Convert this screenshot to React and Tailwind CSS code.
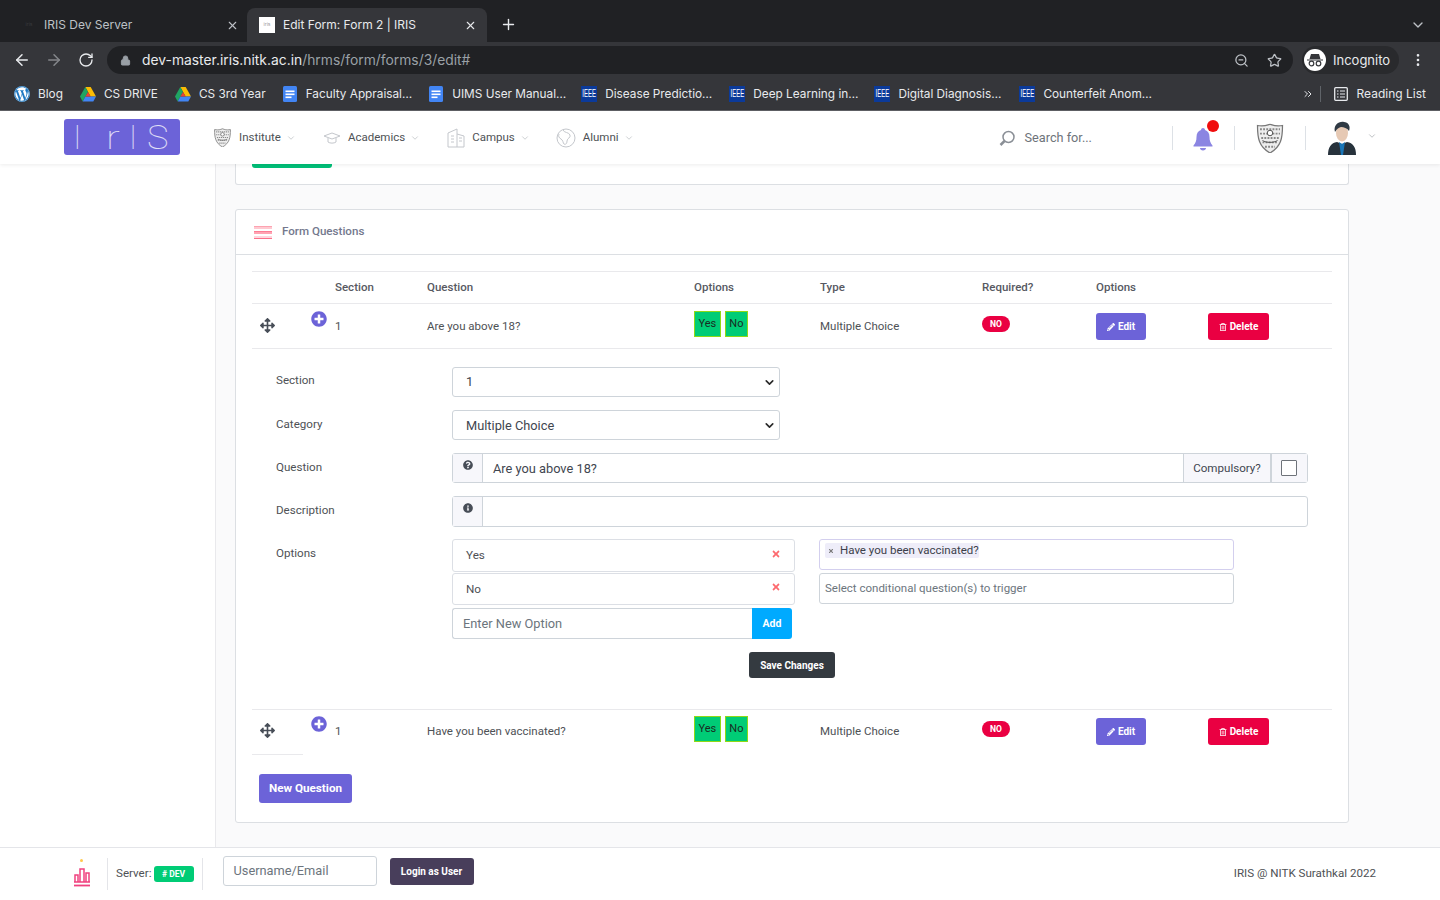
import React from "react";
import { ArrowLeft, ArrowRight, RotateCw, Lock, ZoomOut, Star, ChevronDown, X, Plus, ChevronsRight, MoreVertical } from "lucide-react";
import { FaArrowsAlt, FaPlusCircle, FaQuestionCircle, FaInfoCircle, FaPencilAlt, FaRegTrashAlt, FaTimes, FaWordpress } from "react-icons/fa";

const chromeFont = "font-['Inter','Liberation_Sans',sans-serif]";

function Drive() {
  return (
    <svg width="16" height="15" viewBox="0 0 16 15" className="shrink-0">
      <path d="M5.3 0h5.4l5.3 9.5h-5.4z" fill="#fbbc04" />
      <path d="M5.3 0L0 9.5 2.7 14.5 8 5z" fill="#1fa463" />
      <path d="M5.4 9.5H16l-2.7 5H2.7z" fill="#4285f4" />
      <path d="M5.4 9.5L8 5l2.6 4.5z" fill="#ea4335" />
    </svg>
  );
}
function Docs() {
  return (
    <svg width="16" height="16" viewBox="0 0 16 16" className="shrink-0">
      <rect x="1" width="14" height="16" rx="1.5" fill="#4285f4" />
      <rect x="3.5" y="4.5" width="9" height="1.6" fill="#fff" />
      <rect x="3.5" y="7.5" width="9" height="1.6" fill="#fff" />
      <rect x="3.5" y="10.5" width="6" height="1.6" fill="#fff" />
    </svg>
  );
}
function Ieee() {
  return (
    <div className="w-[16px] h-[16px] shrink-0 bg-[#0b3a9a] flex items-center justify-center overflow-hidden">
      <span className="text-white text-[6px] leading-none scale-y-[1.7] font-['Liberation_Sans',sans-serif]">IEEE</span>
    </div>
  );
}
function Bookmark({ icon, label, className = "" }) {
  return (
    <div className={`flex items-center gap-[8px] ${className}`}>
      {icon}
      <span className="text-[11.8px] mt-[1px] text-[#e8eaed] whitespace-nowrap">{label}</span>
    </div>
  );
}
function Crest({ size = 20, className = "" }) {
  return (
    <svg width={size} height={size} viewBox="0 0 24 24" className={`shrink-0 ${className}`}>
      <path d="M2 2c5 1 7 0 10-1 3 1 5 2 10 1 0 10-1 17-10 22C3 19 2 12 2 2z" fill="#eee" stroke="#777" strokeWidth="1" />
      <path d="M4 5h16M4 8.500h16M5 12h14M6 15.500h12M8 19h8" stroke="#888" strokeWidth="1.500" strokeDasharray="1.500 1" />
      <circle cx="12" cy="8" r="2.2" fill="#fff" stroke="#555" strokeWidth=".8" />
      <path d="M6 14c3 2 9 2 12 0" fill="none" stroke="#555" strokeWidth=".8" />
    </svg>
  );
}
function NavItem({ icon, label, className = "" }) {
  return (
    <div className={`flex items-center ${className}`}>
      {icon}
      <span className="text-[11.5px] text-[#4e5155] ml-[7px]">{label}</span>
      <ChevronDown size={10} strokeWidth={1.2} className="text-[#9aa0a6] ml-[5px]" />
    </div>
  );
}
function Opt({ children }) {
  return <span className="h-[26px] px-[3.5px] flex items-center bg-[#00cc76] border border-[#8fd916] text-[11px] text-[#1a2a22]">{children}</span>;
}
function Row({ q, border, className = "" }) {
  return (
    <div className={`flex h-[45px] ${border ? "border-b border-[#e9e9ec]" : ""} ${className}`}>
      <div className="w-[59px] pl-[8px] pt-[14px]">
        <FaArrowsAlt size={15} className="text-[#474d57]" />
      </div>
      <div className="w-[24px] pt-[7px]">
        <FaPlusCircle size={16} className="text-[#6c63d8]" />
      </div>
      <div className="w-[92px] pt-[14px] text-[11.5px] text-[#4e5155]">1</div>
      <div className="w-[267px] pt-[14px] text-[11.5px] text-[#4e5155]">{q}</div>
      <div className="w-[126px] pt-[7px] flex gap-[4px] items-start"><Opt>Yes</Opt><Opt>No</Opt></div>
      <div className="w-[162px] pt-[14px] text-[11.5px] text-[#4e5155]">Multiple Choice</div>
      <div className="w-[114px] pt-[12px] flex items-start">
        <span className="flex items-center justify-center w-[28px] h-[16px] rounded-full bg-[#ea0042] text-white text-[8.5px] font-bold">NO</span>
      </div>
      <div className="w-[112px] pt-[9px] flex items-start">
        <span className="flex items-center justify-center gap-[3px] w-[50px] h-[27px] rounded-[3px] bg-[#6c63d8] text-white text-[10px] font-bold"><FaPencilAlt size={8} />Edit</span>
      </div>
      <div className="pt-[9px] flex items-start">
        <span className="flex items-center justify-center gap-[3px] w-[61px] h-[27px] rounded-[3px] bg-[#ea0042] text-white text-[10px] font-bold"><FaRegTrashAlt size={8} />Delete</span>
      </div>
    </div>
  );
}
function FormRow({ label, children, className = "", labelPad = "pt-[6px]" }) {
  return (
    <div className={`flex ${className}`}>
      <div className={`w-[200px] pl-[24px] text-[11.6px] text-[#4e5155] ${labelPad}`}>{label}</div>
      {children}
    </div>
  );
}
function Select({ value, textClass = "" }) {
  return (
    <div className="w-[328px] h-[30px] border border-[#ced4da] rounded-[3px] flex items-center justify-between pl-[13px] pr-[3px] text-[12.8px] text-[#3f4650]">
      <span className={textClass}>{value}</span>
      <ChevronDown size={13} strokeWidth={3} className="text-[#2a2a2a]" />
    </div>
  );
}
function OptionBox({ label, h, textClass = "" }) {
  return (
    <div className={`w-[343px] border border-[#dcdfe5] rounded-[3px] flex items-center justify-between pl-[13px] pr-[13px] text-[11.7px] text-[#4e5155] ${h}`}>
      <span className={textClass}>{label}</span>
      <FaTimes size={10} className="text-[#fd6a6f] -mt-[4px]" />
    </div>
  );
}

export default function App() {
  return (
    <div className="w-[1440px] h-[900px] overflow-hidden flex flex-col bg-white font-['Roboto',sans-serif]">
      <div className={chromeFont}>
        <div className="h-[42px] bg-[#202124] flex items-end pl-[8px] relative">
          <div className="w-[239px] h-[34px] flex items-center pl-[13px] pr-[8px]">
            <span className="w-[16px] text-[5px] text-[#3a3b3f] text-center">iris</span>
            <span className="text-xs text-[#bdc1c6] ml-[7px] flex-1">IRIS Dev Server</span>
            <X size={13} className="text-[#bdc1c6]" />
          </div>
          <div className="w-[240px] h-[34px] bg-[#35363a] rounded-t-[8px] flex items-center pl-[12px] pr-[10px]">
            <div className="w-[16px] h-[16px] bg-white text-[5px] text-[#999] flex items-center justify-center">iris</div>
            <span className="text-xs text-[#e8eaed] ml-[8px] flex-1">Edit Form: Form 2 | IRIS</span>
            <X size={13} className="text-[#e8eaed]" />
          </div>
          <Plus size={17} className="text-[#e8eaed] ml-[13px] mb-[9px]" />
          <ChevronDown size={16} className="text-[#bdc1c6] ml-auto mr-[14px] mb-[9px]" />
        </div>
        <div className="h-[36px] bg-[#35363a] flex items-center pl-[13px] pr-[14px]">
          <ArrowLeft size={18} className="text-[#e8eaed]" />
          <ArrowRight size={18} className="text-[#85878b] ml-[14px]" />
          <RotateCw size={16} className="text-[#e8eaed] ml-[15px]" />
          <div className="w-[1186px] h-[28px] ml-[13px] rounded-full bg-[#202124] flex items-center pl-[13px] pr-[11px]">
            <Lock size={11} className="text-[#9aa0a6]" fill="#9aa0a6" />
            <span className="text-[13.85px] ml-[11px] text-[#e8eaed]">dev-master.iris.nitk.ac.in<span className="text-[#9aa0a6]">/hrms/form/forms/3/edit#</span></span>
            <ZoomOut size={15} className="text-[#bdc1c6] ml-auto" />
            <Star size={15} className="text-[#bdc1c6] ml-[18px]" />
          </div>
          <div className="w-[97px] h-[28px] ml-[9px] rounded-full bg-[#292a2d] flex items-center pl-[1px]">
            <div className="w-[22px] h-[22px] ml-[1px] rounded-full bg-white flex items-center justify-center">
              <svg width="16" height="14" viewBox="0 0 16 14">
                <path d="M4 1h8l1.5 5h-11zM0 6.500h16v1H0z" fill="#35363a" />
                <circle cx="4.500" cy="10.500" r="2.300" fill="none" stroke="#35363a" strokeWidth="1.200" />
                <circle cx="11.500" cy="10.500" r="2.300" fill="none" stroke="#35363a" strokeWidth="1.200" />
              </svg>
            </div>
            <span className="text-[13px] text-[#e8eaed] ml-[7px] mt-[2px]">Incognito</span>
          </div>
          <MoreVertical size={16} className="text-[#e8eaed] ml-[11px]" />
        </div>
        <div className="h-[33px] bg-[#35363a] border-b border-[#5f6065] flex items-center pl-[14px] pr-[14px]">
          <Bookmark icon={<FaWordpress size={16} className="text-white bg-[#1e78c2] rounded-full" />} label="Blog" />
          <Bookmark icon={<Drive />} label="CS DRIVE" className="ml-[17px]" />
          <Bookmark icon={<Drive />} label="CS 3rd Year" className="ml-[17px]" />
          <Bookmark icon={<Docs />} label="Faculty Appraisal…" className="ml-[16px]" />
          <Bookmark icon={<Docs />} label="UIMS User Manual…" className="ml-[16px]" />
          <Bookmark icon={<Ieee />} label="Disease Predictio…" className="ml-[15px]" />
          <Bookmark icon={<Ieee />} label="Deep Learning in…" className="ml-[17px]" />
          <Bookmark icon={<Ieee />} label="Digital Diagnosis…" className="ml-[16px]" />
          <Bookmark icon={<Ieee />} label="Counterfeit Anom…" className="ml-[18px]" />
          <ChevronsRight size={12} className="text-[#e8eaed] ml-auto" />
          <div className="w-px h-[16px] bg-[#5f6368] ml-[6px]" />
          <svg width="14" height="14" viewBox="0 0 14 14" className="ml-[13px]">
            <rect x=".7" y=".7" width="12.6" height="12.6" rx="1" fill="none" stroke="#e8eaed" strokeWidth="1.3" />
            <path d="M3 4h1.500M6 4h5M3 7h1.500M6 7h5M3 10h1.500M6 10h5" stroke="#e8eaed" strokeWidth="1.2" />
          </svg>
          <span className="text-[12px] text-[#e8eaed] ml-[9px]">Reading List</span>
        </div>
      </div>

      <div className="relative z-10 h-[53px] shrink-0 bg-white shadow-[0_1px_4px_rgba(0,0,0,0.08)] flex items-center pl-[64px]">
        <div className="w-[116px] h-[36px] -mt-[1px] rounded-[3px] bg-[#6c63d8] flex items-center pl-[9px] text-white/80 text-[33px] font-thin font-['Roboto',sans-serif] leading-none">
          <span>I</span>
          <span className="ml-[24px] scale-x-125 origin-left">r</span>
          <span className="ml-[12px]">I</span>
          <span className="ml-[10px] scale-x-110 origin-left">S</span>
        </div>
        <NavItem icon={<Crest size={19} />} label="Institute" className="ml-[33px]" />
        <NavItem
          icon={
            <svg width="18" height="16" viewBox="0 0 18 16" fill="none" stroke="#c4c7cc" strokeWidth="1">
              <path d="M1 6l8-3 8 3-8 3zM5 8v4c2 1.500 6 1.500 8 0V8" />
            </svg>
          }
          label="Academics"
          className="ml-[27px]"
        />
        <NavItem
          icon={
            <svg width="18" height="20" viewBox="0 0 18 20" fill="none" stroke="#c4c7cc" strokeWidth="1">
              <path d="M1 19V5l9-4v18M10 6l7 2v11M1 19h16M4 8h3M4 11h3M4 14h3M12 10h3M12 13h3" />
            </svg>
          }
          label="Campus"
          className="ml-[27px]"
        />
        <NavItem
          icon={
            <svg width="20" height="20" viewBox="0 0 20 20" fill="none" stroke="#c4c7cc" strokeWidth="1">
              <circle cx="10" cy="10" r="9" />
              <path d="M7 2c1 3 6 2 7 5s-3 3-3 6-2 4-3 3-1-4-3-5-3-3-2-5" />
            </svg>
          }
          label="Alumni"
          className="ml-[26px]"
        />
        <svg width="18" height="18" viewBox="0 0 18 18" fill="none" stroke="#8a8f96" strokeWidth="1.500" className="ml-[364px] mt-[2px]">
          <circle cx="10.500" cy="7" r="5.500" />
          <path d="M6.500 11l-4 4" strokeWidth="2.500" />
        </svg>
        <span className="text-[12.7px] text-[#6e737a] ml-[9px] w-[147px]">Search for...</span>
        <div className="w-px h-[24px] bg-[#dde1e6]" />
        <div className="relative w-[61px] h-[36px] flex items-center justify-center">
          <svg width="22" height="24" viewBox="0 0 22 24" className="mt-[2px]">
            <path d="M11 1c1 0 2 .8 2 2 3 1 4.500 3.500 4.500 7 0 4 1 6 3 8.500v1H1.500v-1c2-2.500 3-4.500 3-8.500 0-3.500 1.500-6 4.500-7 0-1.200 1-2 2-2zM8 21h6c0 1.500-1.300 2.500-3 2.500S8 22.500 8 21z" fill="#8b85e2" />
          </svg>
          <div className="absolute top-[0px] left-[34px] w-[12px] h-[12px] rounded-full bg-[#f00d0d]" />
        </div>
        <div className="w-px h-[24px] bg-[#dde1e6]" />
        <div className="w-[70px] flex justify-center"><Crest size={30} /></div>
        <div className="w-px h-[24px] bg-[#dde1e6]" />
        <svg width="28" height="34" viewBox="0 0 28 34" className="ml-[22px]">
          <path d="M0 34c0-8 3-12 9-13l5 2 5-2c6 1 9 5 9 13z" fill="#27323c" />
          <path d="M11 21l3 2 3-2-2 13h-2z" fill="#1976b8" />
          <ellipse cx="14" cy="12" rx="6" ry="8.500" fill="#e6c9b4" />
          <path d="M7 11C5 4 11 0 16 1c4 0 7 4 5 9-2-3-5-4-8-4-3 1-4 2-6 5z" fill="#2f3a44" />
        </svg>
        <ChevronDown size={10} strokeWidth={1.2} className="text-[#7d8288] ml-[11px] -mt-[3px]" />
      </div>

      <div className="flex-1 flex min-h-0 bg-[#fafafb]">
        <div className="w-[216px] shrink-0 bg-white border-r border-[#e9e9ec]" />
        <div className="flex-1 pl-[19px] pr-[91px]">
          <div className="h-[21px] bg-white border border-t-0 border-[#dcdfe3] rounded-b-[3px] pl-[16px]">
            <div className="w-[80px] h-[4px] bg-[#00bf78] rounded-b-[3px]" />
          </div>
          <div className="mt-[24px] h-[614px] bg-white border border-[#dcdfe3] rounded-[3px]">
            <div className="h-[45px] border-b border-[#dcdfe3] flex items-center pl-[18px]">
              <div className="w-[18px] h-[13px] flex flex-col justify-between">
                <div className="h-[3px] bg-[#ffc9d1] border-t border-[#fda3b1]" />
                <div className="h-[3px] bg-[#ffa3b2] border-t border-[#fd7c94]" />
                <div className="h-[3px] bg-[#ffd6dd] border-b border-[#fb6f8a]" />
              </div>
              <span className="text-[11.6px] text-[#74788d] ml-[10px] font-medium pb-[1px]">Form Questions</span>
            </div>
            <div className="pt-[16px] pl-[16px] pr-[16px]">
              <div className="flex h-[33px] border-y border-[#e9e9ec] items-center text-[11.5px] font-medium text-[#575962]">
                <div className="w-[83px]" />
                <div className="w-[92px]">Section</div>
                <div className="w-[267px]">Question</div>
                <div className="w-[126px]">Options</div>
                <div className="w-[162px]">Type</div>
                <div className="w-[114px]">Required?</div>
                <div>Options</div>
              </div>
              <Row q="Are you above 18?" border />

              <div className="pt-[18px] h-[361px] border-b border-[#e9e9ec]">
                <FormRow label="Section" labelPad="pt-[5px]"><Select value="1" /></FormRow>
                <FormRow label="Category" className="mt-[13px]"><Select value="Multiple Choice" textClass="pt-[1px]" /></FormRow>
                <FormRow label="Question" className="mt-[13px]">
                  <div className="w-[856px] h-[30px] border border-[#ced4da] rounded-[3px] flex text-[12.8px] text-[#3f4650]">
                    <div className="w-[30px] bg-[#f7f7fb] border-r border-[#ced4da] flex justify-center pt-[6px]"><FaQuestionCircle size={10} className="text-[#474d57]" /></div>
                    <div className="flex-1 pl-[10px] pt-[1px] flex items-center">Are you above 18?</div>
                    <div className="w-[87px] bg-[#f7f7fb] border-l border-[#ced4da] pt-[1px] flex items-center justify-center text-[11.6px]">Compulsory?</div>
                    <div className="w-[37px] bg-[#f7f7fb] border-l-2 border-[#ced4da] flex items-center justify-center pr-[2px]">
                      <div className="w-[16px] h-[16px] bg-white border border-[#6e737a] rounded-[1px]" />
                    </div>
                  </div>
                </FormRow>
                <FormRow label="Description" className="mt-[13px]">
                  <div className="w-[856px] h-[31px] border border-[#ced4da] rounded-[3px] flex">
                    <div className="w-[30px] bg-[#f7f7fb] border-r border-[#ced4da] flex justify-center pt-[6px]"><FaInfoCircle size={10} className="text-[#474d57]" /></div>
                  </div>
                </FormRow>
                <FormRow label="Options" className="mt-[12px]">
                  <div className="w-[367px]">
                    <OptionBox label="Yes" h="h-[33px]" />
                    <div className="mt-[1px]"><OptionBox label="No" h="h-[32px]" textClass="pt-[1px]" /></div>
                    <div className="mt-[3px] w-[340px] h-[31px] flex">
                      <div className="flex-1 border border-r-0 border-[#ced4da] rounded-l-[3px] flex items-center pl-[10px] text-[12.8px] text-[#6c757d]">Enter New Option</div>
                      <div className="w-[40px] bg-[#00aaff] rounded-r-[3px] flex items-center justify-center text-white text-[10.5px] font-bold">Add</div>
                    </div>
                  </div>
                  <div className="w-[415px]">
                    <div className="h-[31px] border border-[#d3cfee] rounded-[3px] pl-[5px] pt-[3px] flex items-start">
                      <span className="flex h-[15px] items-center bg-[#eeedf9] rounded-[2px] pl-[1px] text-[11.5px] leading-none text-[#3c3f4a]">
                        <FaTimes size={6} className="text-[#777] mx-[2px]" /><span className="ml-[4px]">Have you been vaccinated?</span>
                      </span>
                    </div>
                    <div className="mt-[3px] h-[31px] pt-[1px] border border-[#ced4da] rounded-[3px] flex items-center pl-[5px] text-[11.5px] text-[#6c757d]">
                      Select conditional question(s) to trigger
                    </div>
                  </div>
                </FormRow>
                <div className="mt-[13px] ml-[497px] w-[86px] h-[26px] bg-[#343a40] rounded-[3px] flex items-center justify-center text-white text-[10px] font-bold">
                  Save Changes
                </div>
              </div>

              <Row q="Have you been vaccinated?" className="-mt-[1px]" />
              <div className="w-[51px] h-px bg-[#e9e9ec]" />
              <div className="mt-[19px] ml-[7px] w-[93px] h-[29px] bg-[#6c63d8] rounded-[3px] flex items-center justify-center text-white text-[11.7px] font-bold">
                New Question
              </div>
            </div>
          </div>
        </div>
      </div>

      <div className="h-[53px] shrink-0 border-t border-[#e4e5e9] bg-white flex items-center pl-[73px] pr-[64px]">
        <div className="relative w-[18px] h-[26px] -mt-[4px]">
          <div className="absolute top-0 left-[7px] w-[3px] h-[3px] rounded-full bg-[#ffc94d]" />
          <svg width="18" height="20" viewBox="0 0 18 20" fill="none" stroke="#f0417f" strokeWidth="1.500" className="absolute top-[8px] left-0">
            <path d="M2 15V8h3v7M7 15V2h4v13M13 15V6h3v9M1 15h16" />
            <path d="M1 18.500h16" strokeWidth="1.800" />
          </svg>
        </div>
        <div className="w-px h-[32px] bg-[#e4e5e9] ml-[16px]" />
        <span className="text-[11.6px] text-[#4e5155] ml-[8px]">Server:</span>
        <span className="ml-[2px] w-[40px] h-[16px] bg-[#00cc76] rounded-[3px] flex items-center justify-center text-white text-[8.5px] font-bold"># DEV</span>
        <div className="w-px h-[32px] bg-[#e4e5e9] ml-[8px]" />
        <div className="ml-[20px] w-[154px] h-[30px] -mt-[6px] border border-[#ced4da] rounded-[3px] flex items-center pl-[10px] text-[12.8px] text-[#6c757d]">Username/Email</div>
        <div className="ml-[13px] w-[84px] h-[27px] -mt-[6px] bg-[#483e5b] rounded-[3px] flex items-center justify-center text-white text-[10px] font-bold">Login as User</div>
        <span className="ml-auto text-[11.6px] text-[#4e5155]">IRIS @ NITK Surathkal 2022</span>
      </div>
    </div>
  );
}
